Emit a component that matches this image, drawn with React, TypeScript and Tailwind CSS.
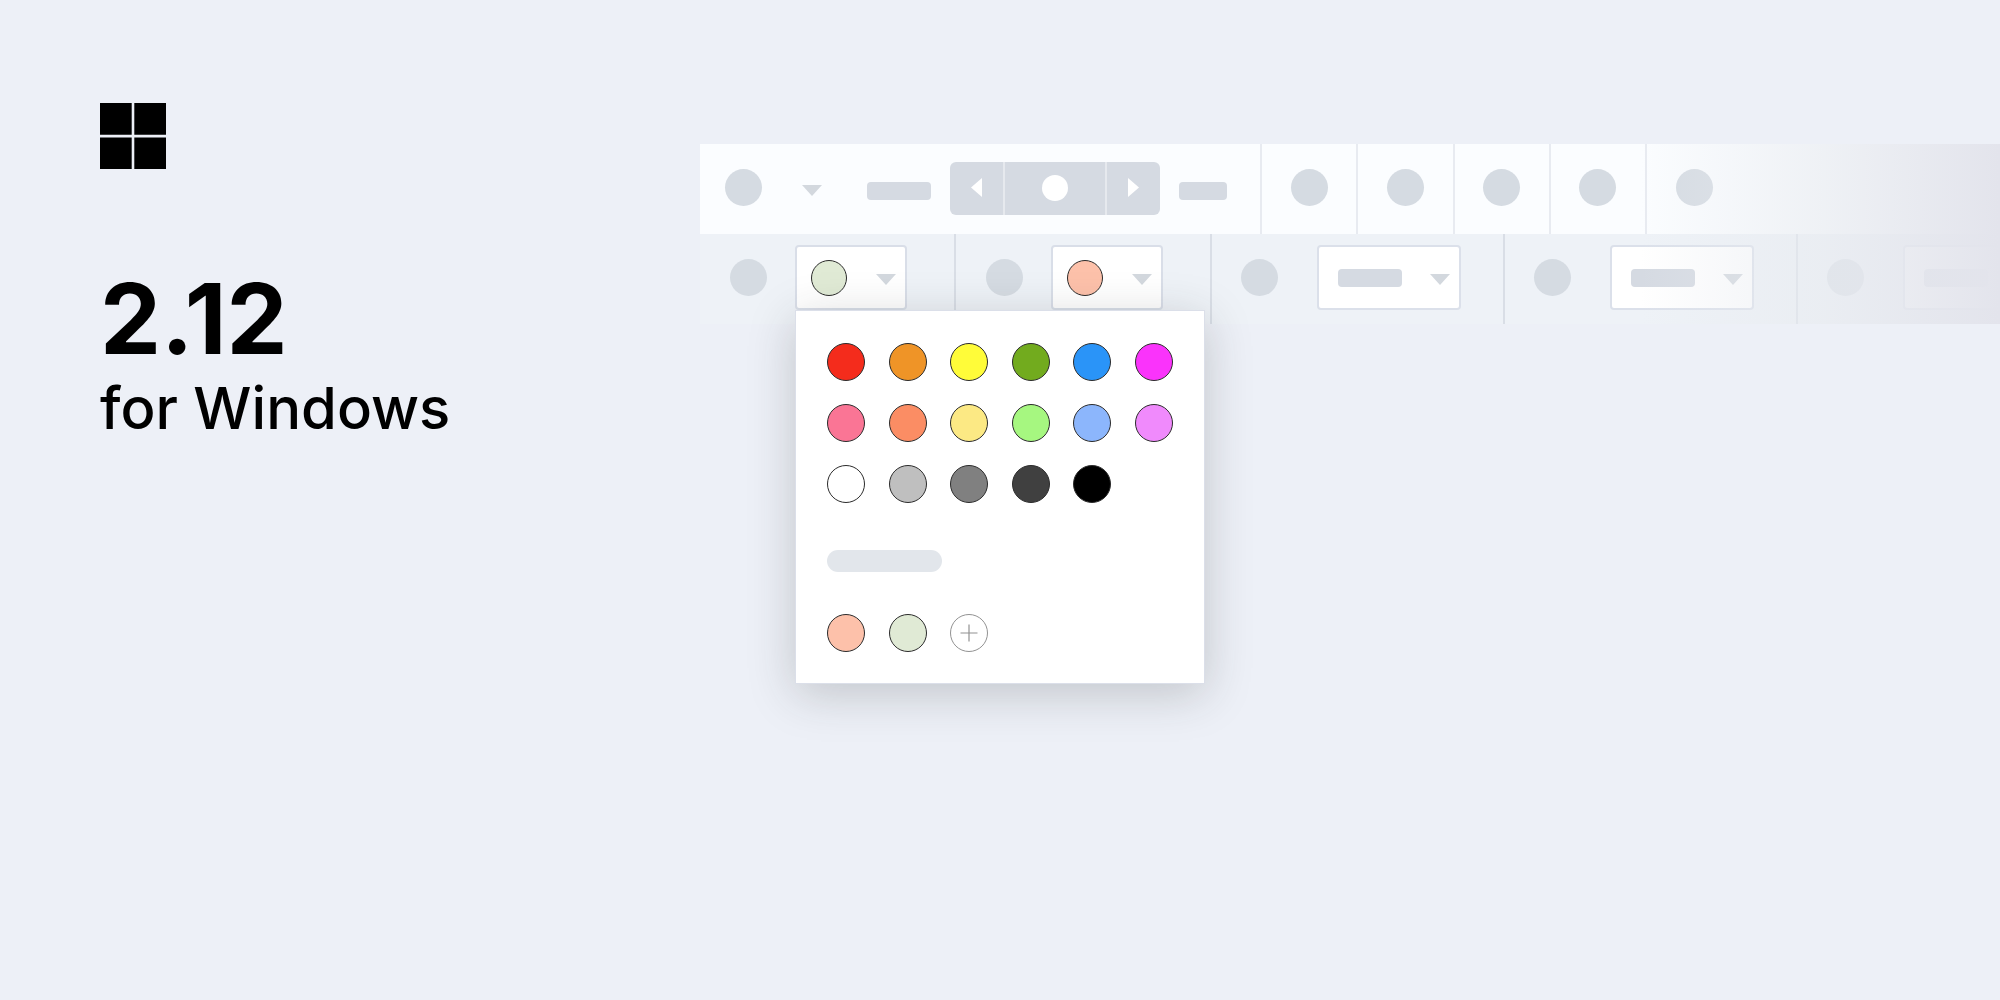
import { clsx } from "clsx";

const palette = [
  { name: "Red", color: "bg-[#f42c1c]" },
  { name: "Orange", color: "bg-[#ef9427]" },
  { name: "Yellow", color: "bg-[#fffc39]" },
  { name: "Green", color: "bg-[#72ab1e]" },
  { name: "Blue", color: "bg-[#2a94f8]" },
  { name: "Magenta", color: "bg-[#fa33fb]" },
  { name: "Pink", color: "bg-[#fa7595]" },
  { name: "Coral", color: "bg-[#fb8d64]" },
  { name: "Light yellow", color: "bg-[#fce984]" },
  { name: "Light green", color: "bg-[#a6f780]" },
  { name: "Light blue", color: "bg-[#8cb6fc]" },
  { name: "Light magenta", color: "bg-[#f08afc]" },
  { name: "White", color: "bg-white" },
  { name: "Silver", color: "bg-[#bfbfbf]" },
  { name: "Gray", color: "bg-[#808080]" },
  { name: "Dark gray", color: "bg-[#404040]" },
  { name: "Black", color: "bg-black" },
];

const customColors = [
  { name: "Peach", color: "bg-[#fdc1aa]" },
  { name: "Sage", color: "bg-[#e0ead5]" },
];

const tools = ["Tool 1", "Tool 2", "Tool 3", "Tool 4"];

const WindowsLogo = () => (
  <svg viewBox="0 0 66 66" className="size-[66px]" role="img" aria-label="Windows">
    <path d="M0 0h31.700v31.700H0zM34.300 0H66v31.700H34.300zM0 34.600h31.700V66H0zM34.300 34.600H66V66H34.300z" />
  </svg>
);

const Caret = () => (
  <svg viewBox="0 0 20 11" className="h-[11px] w-5 fill-[#d3d8de]" aria-hidden="true">
    <path d="M0 0h20L10 11z" />
  </svg>
);

const Dot = () => <span className="block size-[37px] shrink-0 rounded-full bg-[#d5dbe2]" />;

const DotButton = ({ label }: { label: string }) => (
  <button type="button" aria-label={label} className="shrink-0 rounded-full">
    <Dot />
  </button>
);

const Bar = ({ width }: { width: string }) => (
  <span className={clsx("block h-[18px] shrink-0 rounded bg-[#d5dae2]", width)} />
);

const Swatch = ({ name, color }: { name: string; color: string }) => (
  <button
    type="button"
    aria-label={name}
    className={clsx("size-[38px] rounded-full border border-[#2b2b2b]", color)}
  />
);

const ColorSelect = ({ label, color }: { label: string; color: string }) => (
  <button
    type="button"
    aria-label={label}
    aria-haspopup="true"
    className="flex h-[65px] w-28 items-center justify-between rounded border-2 border-[#d9dee8] bg-white pl-[14px] pr-[9px]"
  >
    <span className={clsx("block size-9 rounded-full border border-[#2b2b2b]", color)} />
    <span className="pt-1">
      <Caret />
    </span>
  </button>
);

const TextSelect = ({ label }: { label: string }) => (
  <button
    type="button"
    aria-label={label}
    aria-haspopup="true"
    className="flex h-[65px] w-36 shrink-0 items-center justify-between rounded border-2 border-[#dbe0ea] bg-white pl-[19px] pr-[9px]"
  >
    <Bar width="w-16" />
    <span className="pt-1">
      <Caret />
    </span>
  </button>
);

const ColorPopup = () => (
  <div
    role="dialog"
    aria-label="Colors"
    className="absolute left-0 top-[65px] z-10 w-[410px] border border-[#dbdfe9] bg-white px-[31px] pb-[31px] pt-8 shadow-[0_10px_44px_rgba(40,45,45,0.22)]"
  >
    <div className="grid grid-cols-[repeat(6,38px)] justify-between gap-y-[23px]">
      {palette.map((item) => (
        <Swatch key={item.name} {...item} />
      ))}
    </div>
    <div className="mt-[47px] h-[22px] w-[115px] rounded-full bg-[#e2e6eb]" />
    <div className="mt-[42px] grid grid-cols-[repeat(6,38px)] justify-between">
      {customColors.map((item) => (
        <Swatch key={item.name} {...item} />
      ))}
      <button
        type="button"
        aria-label="Add color"
        className="flex size-[38px] items-center justify-center rounded-full border border-[#929292] bg-white"
      >
        <svg viewBox="0 0 18 18" className="size-[18px] stroke-[#929292]" aria-hidden="true">
          <path d="M9 0.5v17M0.5 9h17" strokeWidth="1.2" />
        </svg>
      </button>
    </div>
  </div>
);

const TopRow = () => (
  <div className="flex h-[90px] bg-[#fbfdff]">
    <div className="flex w-[560px] shrink-0 items-center pb-[3px] pl-[25px]">
      <DotButton label="Menu" />
      <span className="ml-10 pt-1.5">
        <Caret />
      </span>
      <span className="ml-[45px] pt-1.5">
        <Bar width="w-16" />
      </span>
      <div className="ml-[19px] mt-px flex h-[53px] w-[210px] divide-x-2 divide-[#e6e9ee] overflow-hidden rounded-md bg-[#d5dae2]">
        <button type="button" aria-label="Previous" className="flex w-[55px] items-center justify-center pb-px">
          <svg viewBox="0 0 11 19" className="h-[19px] w-[11px] fill-white" aria-hidden="true">
            <path d="M11 0v19L0 9.500z" />
          </svg>
        </button>
        <button type="button" aria-label="Current" className="flex flex-1 items-center justify-center pb-px">
          <span className="block size-[26px] rounded-full bg-white" />
        </button>
        <button type="button" aria-label="Next" className="flex w-[53px] items-center justify-center pb-px">
          <svg viewBox="0 0 11 19" className="h-[19px] w-[11px] fill-white" aria-hidden="true">
            <path d="M0 0v19L11 9.500z" />
          </svg>
        </button>
      </div>
      <span className="ml-[19px] pt-1.5">
        <Bar width="w-12" />
      </span>
    </div>
    <div className="grid w-[385px] shrink-0 grid-cols-4">
      {tools.map((tool) => (
        <div key={tool} className="flex items-center justify-center border-l-2 border-[#e8ebf1] pb-[3px]">
          <DotButton label={tool} />
        </div>
      ))}
    </div>
    <div className="flex flex-1 items-center border-l-2 border-[#e8ebf1] pb-[3px] pl-[29px]">
      <DotButton label="Tool 5" />
    </div>
  </div>
);

const BottomRow = () => (
  <div className="flex h-[90px] bg-[#eef2f7]">
    <div className="flex w-64 shrink-0 items-center border-r-2 border-[#d9dee6] pb-[3px] pl-[30px]">
      <Dot />
      <div className="relative ml-7">
        <ColorSelect label="Fill color" color="bg-[#e0ead5]" />
        <ColorPopup />
      </div>
    </div>
    <div className="flex w-64 shrink-0 items-center gap-7 border-r-2 border-[#d9dee6] pb-[3px] pl-[30px]">
      <Dot />
      <ColorSelect label="Line color" color="bg-[#fdc1aa]" />
    </div>
    <div className="flex w-[293px] shrink-0 items-center gap-[39px] border-r-2 border-[#d9dee6] pb-[3px] pl-[29px]">
      <Dot />
      <TextSelect label="Style" />
    </div>
    <div className="flex w-[293px] shrink-0 items-center gap-[39px] border-r-2 border-[#d9dee6] pb-[3px] pl-[29px]">
      <Dot />
      <TextSelect label="Size" />
    </div>
    <div className="flex min-w-0 flex-1 items-center gap-[39px] pb-[3px] pl-[29px]">
      <Dot />
      <TextSelect label="Font" />
    </div>
  </div>
);

export default function App() {
  return (
    <div className="flex min-h-screen overflow-hidden bg-[#edf0f7] font-['Inter',sans-serif] text-black">
      <header className="w-[35%] shrink-0 pl-[100px] pt-[103px]">
        <WindowsLogo />
        <h1 className="mt-[102px]">
          <span className="block text-[97px] font-bold leading-[96px]">2.12</span>
          <span className="block text-[58px] font-medium leading-[82px]">for Windows</span>
        </h1>
      </header>
      <main className="min-w-0 flex-1 pt-36">
        <div className="relative">
          <TopRow />
          <BottomRow />
          <div className="pointer-events-none absolute inset-y-0 right-0 w-[360px] bg-linear-to-r from-[#e3e5ec]/0 via-[#e8ebf0]/65 to-[#e3e4ec]" />
        </div>
      </main>
    </div>
  );
}
